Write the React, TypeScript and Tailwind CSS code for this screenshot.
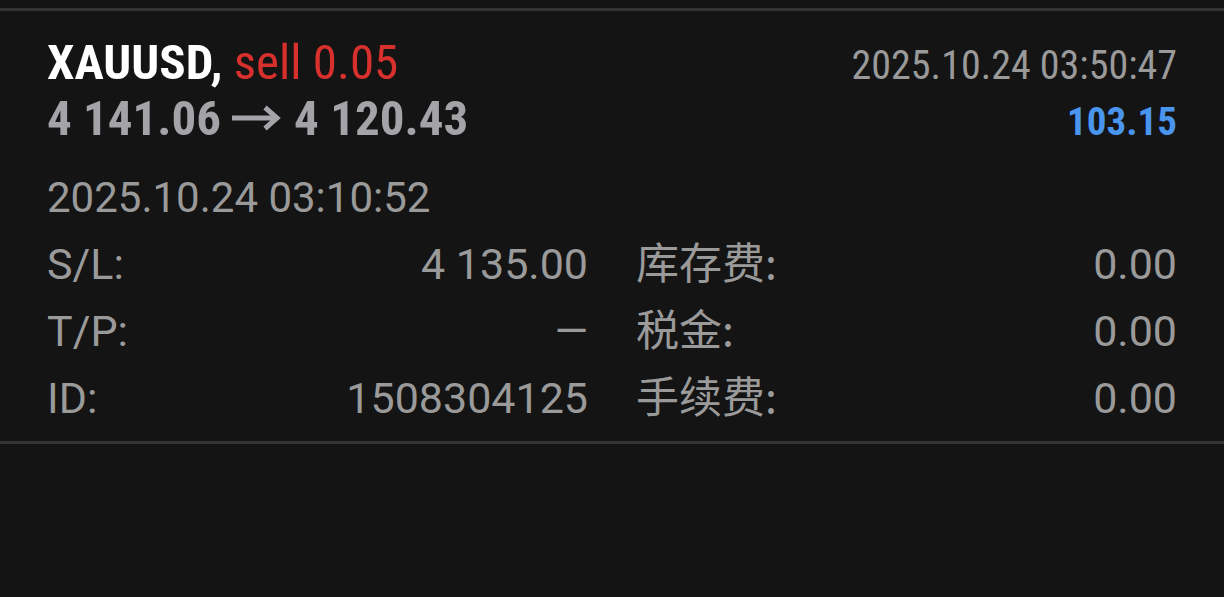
import React from 'react';

const details = [
  { label: 'S/L:', value: '4 135.00', cnLabel: '库存费', cnValue: '0.00' },
  { label: 'T/P:', value: '—', cnLabel: '税金', cnValue: '0.00' },
  { label: 'ID:', value: '1508304125', cnLabel: '手续费', cnValue: '0.00' },
];

function Arrow() {
  return (
    <svg
      width="49"
      height="26"
      viewBox="0 0 49 26"
      className="ml-[11px] mr-[13px] inline-block align-[4px]"
      fill="none"
      stroke="currentColor"
      strokeWidth="5"
    >
      <path d="M0 13H45" />
      <path d="M33 2.5L45 13L33 23.5" strokeLinejoin="miter" />
    </svg>
  );
}

export default function App() {
  const condensed = "font-['Roboto_Condensed','Roboto',sans-serif] [font-stretch:condensed]";

  return (
    <div className="min-h-screen bg-[#141414] pt-2 font-['Roboto',sans-serif] text-[#9a9a9a]">
      <div className="border-y-[3px] border-[#333333] px-[47px] pt-[24px] pb-[9px]">
        <div className="flex h-[56px] items-baseline justify-between">
          <div className={`${condensed} text-[49px] font-bold leading-[56px] text-white`}>
            XAUUSD, <span className="font-normal text-[#d8302d]">sell 0.05</span>
          </div>
          <div className={`${condensed} text-[40px] leading-[56px] text-[#9a9a9a]`}>
            2025.10.24 03:50:47
          </div>
        </div>
        <div className="flex h-[56px] items-baseline justify-between">
          <div className={`${condensed} text-[49px] font-bold leading-[56px] text-[#a3a3a8]`}>
            4 141.06
            <Arrow />
            4 120.43
          </div>
          <div className={`${condensed} text-[39px] font-bold leading-[56px] text-[#4a95ee]`}>
            103.15
          </div>
        </div>

        <div className="mt-[26px] text-[42px] leading-[50px]">2025.10.24 03:10:52</div>

        <div className="mt-2 grid grid-cols-2 items-baseline gap-x-12">
          {details.map((row) => (
            <React.Fragment key={row.label}>
              <div className="flex h-[67px] items-baseline justify-between text-[43px] leading-[67px]">
                <span>{row.label}</span>
                <span>{row.value}</span>
              </div>
              <div className="flex h-[67px] items-baseline justify-between text-[43px] leading-[67px]">
                <span className="font-['Noto_Sans_CJK_SC',sans-serif] leading-[43px]">
                  {row.cnLabel}
                  <span>:</span>
                </span>
                <span>{row.cnValue}</span>
              </div>
            </React.Fragment>
          ))}
        </div>
      </div>
    </div>
  );
}
